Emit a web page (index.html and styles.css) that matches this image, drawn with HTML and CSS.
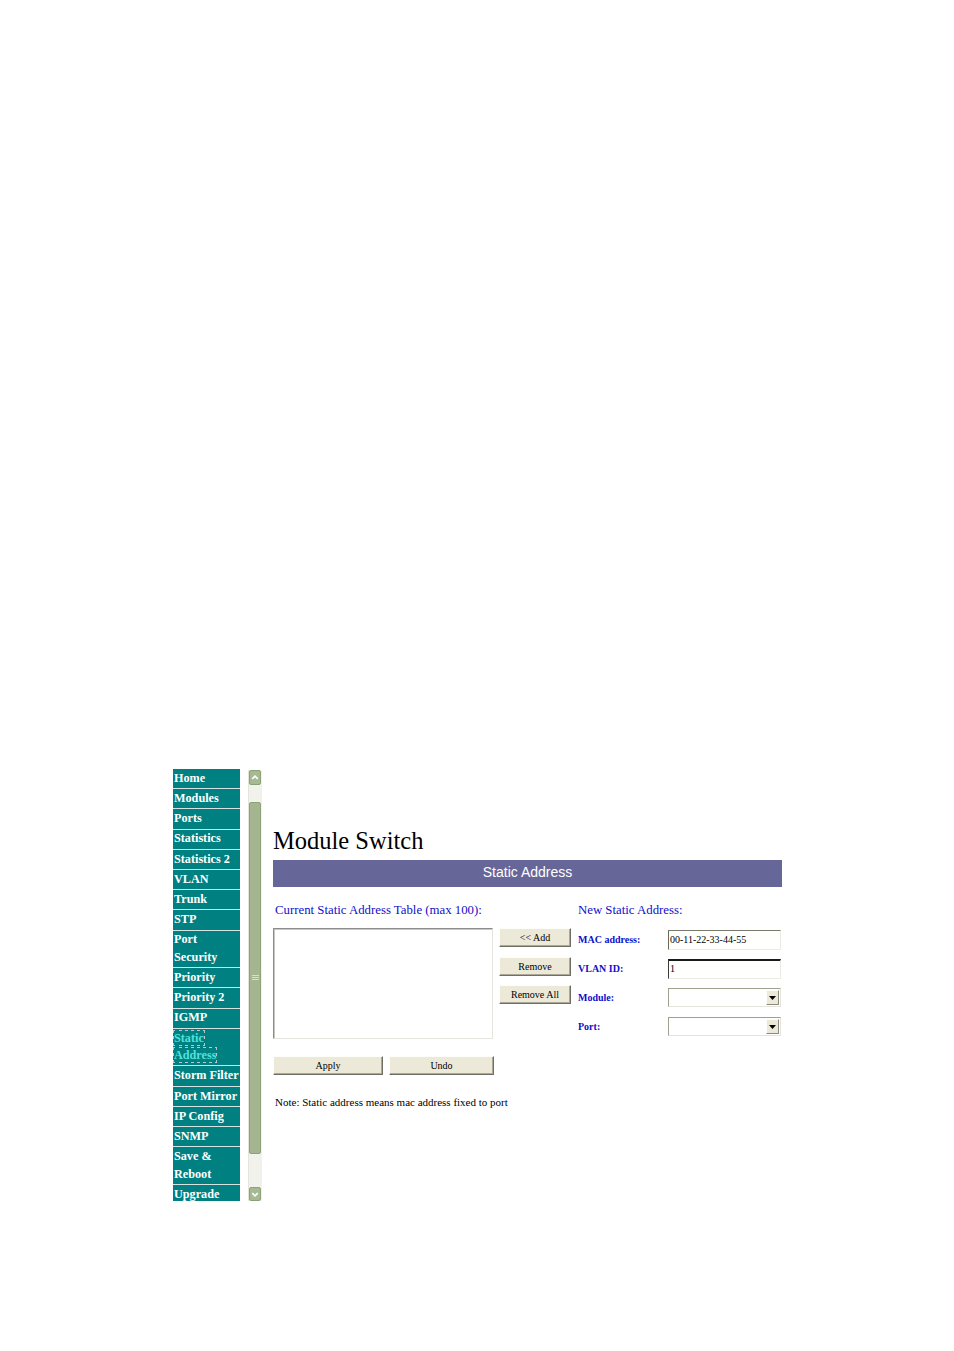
FILE: index.html
```html
<!DOCTYPE html>
<html>
<head>
<meta charset="utf-8">
<title>Module Switch - Static Address</title>
<link rel="stylesheet" href="styles.css">
</head>
<body>
<div class="page">
  <nav class="sidebar">
    <a class="item">Home</a>
    <a class="item">Modules</a>
    <a class="item">Ports</a>
    <a class="item">Statistics</a>
    <a class="item">Statistics 2</a>
    <a class="item">VLAN</a>
    <a class="item">Trunk</a>
    <a class="item">STP</a>
    <a class="item">Port<br>Security</a>
    <a class="item">Priority</a>
    <a class="item">Priority 2</a>
    <a class="item">IGMP</a>
    <a class="item active"><span class="focus">Static<br>Address</span></a>
    <a class="item">Storm Filter</a>
    <a class="item">Port Mirror</a>
    <a class="item">IP Config</a>
    <a class="item">SNMP</a>
    <a class="item">Save &amp;<br>Reboot</a>
    <a class="item">Upgrade</a>
  </nav>

  <div class="scrollbar">
    <div class="sb-btn">
      <svg width="11" height="13" viewBox="0 0 11 13"><path d="M2.5 8 L5.5 5 L8.5 8" fill="none" stroke="#fff" stroke-width="1.8"/></svg>
    </div>
    <div class="sb-thumb">
      <svg class="grip" width="7" height="6" viewBox="0 0 7 6"><path d="M0 0.5 H7 M0 2.5 H7 M0 4.5 H7" stroke="#d6e0cb" stroke-width="1"/></svg>
    </div>
    <div class="sb-btn sb-bottom">
      <svg width="11" height="13" viewBox="0 0 11 13"><path d="M2.5 5 L5.5 8 L8.5 5" fill="none" stroke="#fff" stroke-width="1.8"/></svg>
    </div>
  </div>

  <main class="content">
    <h1 class="title">Module Switch</h1>
    <div class="bar">Static Address</div>
    <div class="panel">
      <div class="col-left">
        <div class="caption">Current Static Address Table (max 100):</div>
        <div class="listbox"></div>
        <div class="actions">
          <button class="btn btn-apply">Apply</button>
          <button class="btn btn-undo">Undo</button>
        </div>
        <p class="note">Note: Static address means mac address fixed to port</p>
      </div>
      <div class="col-mid">
        <button class="btn btn-side">&lt;&lt; Add</button>
        <button class="btn btn-side">Remove</button>
        <button class="btn btn-side">Remove All</button>
      </div>
      <div class="col-right">
        <div class="caption caption-right">New Static Address:</div>
        <div class="form">
          <div class="row">
            <span class="label">MAC address:</span>
            <div class="input">00-11-22-33-44-55</div>
          </div>
          <div class="row">
            <span class="label">VLAN ID:</span>
            <div class="input input-dark">1</div>
          </div>
          <div class="row">
            <span class="label">Module:</span>
            <div class="select">
              <span class="sel-btn"><svg width="7" height="4" viewBox="0 0 7 4"><path d="M0 0 H7 L3.5 4 Z" fill="#000"/></svg></span>
            </div>
          </div>
          <div class="row">
            <span class="label">Port:</span>
            <div class="select">
              <span class="sel-btn"><svg width="7" height="4" viewBox="0 0 7 4"><path d="M0 0 H7 L3.5 4 Z" fill="#000"/></svg></span>
            </div>
          </div>
        </div>
      </div>
    </div>
  </main>
</div>
</body>
</html>
```

FILE: styles.css
```css
* { box-sizing: border-box; }

html, body {
  margin: 0;
  padding: 0;
  background: #ffffff;
}

body {
  font-family: "Liberation Serif", "Times New Roman", serif;
  color: #000;
}

.page {
  display: flex;
  align-items: flex-start;
  padding: 769px 0 0 173px;
  height: 1351px;
}

/* ---------- sidebar ---------- */
.sidebar {
  width: 67px;
  height: 432px;
  overflow: hidden;
  display: flex;
  flex-direction: column;
  gap: 1px;
  background: #d5e3e3;
}

.item {
  display: block;
  flex: none;
  background: #008080;
  color: #ffffff;
  font-family: "Liberation Serif", "Times New Roman", serif;
  font-weight: bold;
  font-size: 12.2px;
  line-height: 17.5px;
  padding: 0.9px 0 0.8px 1px;
  white-space: nowrap;
  text-decoration: none;
}

.item.active {
  color: #4fe3dc;
}

.focus {
  outline: 1px dotted #b8c8c8;
  outline-offset: 0;
}

/* ---------- scrollbar ---------- */
.scrollbar {
  width: 14px;
  height: 431px;
  margin: 1px 0 0 8px;
  background: #f2f2ec;
  border-left: 1px solid #e4e4dc;
  padding: 0 1px 0 0;
  display: flex;
  flex-direction: column;
}

.sb-btn {
  width: 12px;
  height: 15px;
  background: #a6b992;
  border: 1px solid #8aa276;
  border-radius: 2px;
  display: flex;
  align-items: center;
  justify-content: center;
}

.sb-bottom {
  margin-top: auto;
  height: 14px;
}

.sb-thumb {
  width: 12px;
  height: 352px;
  margin-top: 17px;
  background: #a3b68f;
  border: 1px solid #8da37a;
  border-radius: 2px;
  display: flex;
  align-items: center;
  justify-content: center;
}

.grip { display: block; }

/* ---------- content ---------- */
.content {
  margin-left: 11px;
  width: 509px;
}

.title {
  margin: 57px 0 4px 0;
  font-family: "Liberation Serif", "Times New Roman", serif;
  font-weight: normal;
  font-size: 24.5px;
  line-height: 30px;
  color: #000;
}

.bar {
  height: 27px;
  background: #666699;
  color: #ffffff;
  text-align: center;
  font-family: "Liberation Sans", Arial, sans-serif;
  font-size: 14px;
  line-height: 25px;
}

.panel {
  display: flex;
  align-items: flex-start;
  margin-top: 15px;
}

.caption {
  color: #0f0fcc;
  font-family: "Liberation Serif", "Times New Roman", serif;
  font-size: 12.8px;
  line-height: 16px;
  padding-left: 2px;
  white-space: nowrap;
}

.caption-right {
  padding-left: 0;
}

.col-left {
  width: 221px;
}

.listbox {
  width: 220px;
  height: 111px;
  margin-top: 10px;
  background: #ffffff;
  border: 1px solid;
  border-color: #8c8c8c #e6e6e0 #e6e6e0 #8c8c8c;
  box-shadow: inset 1px 1px 0 #c8c8c0;
}

.actions {
  display: flex;
  gap: 6px;
  margin-top: 17px;
}

.btn {
  display: block;
  margin: 0;
  padding: 0;
  height: 19px;
  background: #ece9d8;
  color: #000;
  font-family: "Liberation Serif", "Times New Roman", serif;
  font-size: 10px;
  line-height: 17px;
  text-align: center;
  border: 1px solid;
  border-color: #fdfdfa #716f64 #716f64 #fdfdfa;
  box-shadow: inset -1px -1px 0 #aca899;
}

.btn-apply { width: 110px; }
.btn-undo { width: 105px; }

.note {
  margin: 19px 0 0 0;
  padding-left: 2px;
  font-family: "Liberation Serif", "Times New Roman", serif;
  font-size: 11px;
  line-height: 16px;
  white-space: nowrap;
}

.col-mid {
  width: 72px;
  margin-left: 5px;
  padding-top: 26px;
  display: flex;
  flex-direction: column;
  gap: 9.5px;
}

.btn-side { width: 72px; }

.col-right {
  width: 204px;
  margin-left: 7px;
}

.form {
  margin-top: 12px;
  display: flex;
  flex-direction: column;
  gap: 9px;
}

.row {
  display: flex;
  align-items: center;
  height: 20px;
}

.label {
  width: 90px;
  color: #0f0fcc;
  font-family: "Liberation Serif", "Times New Roman", serif;
  font-weight: bold;
  font-size: 10px;
  line-height: 14px;
}

.input {
  width: 113px;
  height: 20px;
  background: #fffffe;
  border: 1px solid;
  border-color: #7a7a6a #ecebe4 #ecebe4 #6a6a5a;
  font-family: "Liberation Serif", "Times New Roman", serif;
  font-size: 10px;
  line-height: 17px;
  padding-left: 1px;
  white-space: nowrap;
}

.input-dark {
  border-top: 2px solid #1a1a1a;
  border-left-color: #3a3a3a;
  line-height: 16px;
}

.select {
  width: 113px;
  height: 19px;
  align-self: flex-start;
  background: #ffffff;
  border: 1px solid;
  border-color: #a0a090 #e4e4dc #e4e4dc #a0a090;
  display: flex;
  justify-content: flex-end;
  align-items: center;
  padding-right: 1px;
}

.sel-btn {
  width: 13px;
  height: 15px;
  background: #ece9d8;
  border: 1px solid;
  border-color: #fdfdfa #8c8a80 #8c8a80 #fdfdfa;
  display: flex;
  align-items: center;
  justify-content: center;
}

.sel-btn svg { display: block; }
```
